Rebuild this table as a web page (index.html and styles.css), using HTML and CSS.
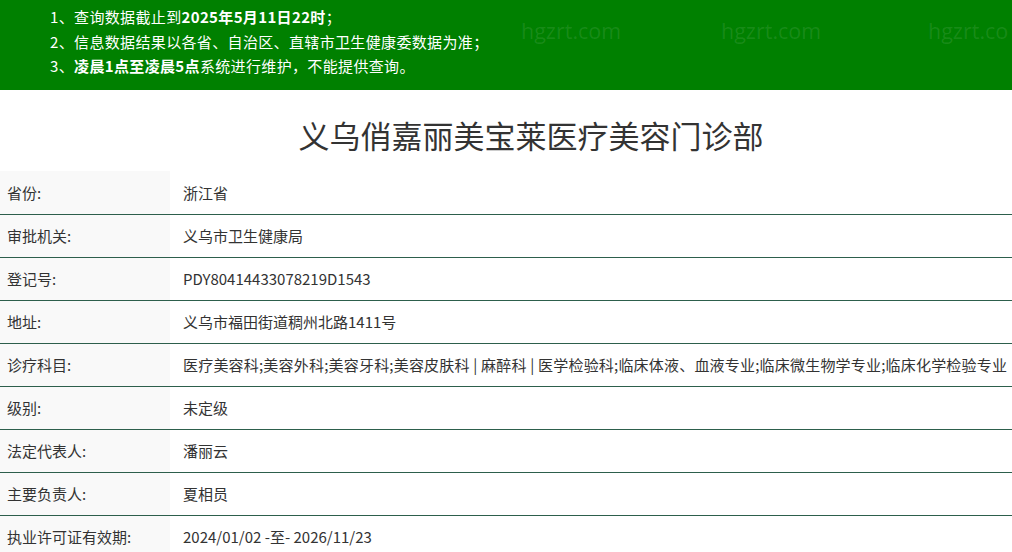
FILE: index.html
```html
<!DOCTYPE html>
<html lang="zh-CN">
  <head>
    <meta charset="UTF-8" />
    <meta name="viewport" content="width=device-width, initial-scale=1.0" />
    <title>义乌俏嘉丽美宝莱医疗美容门诊部</title>
    <link rel="stylesheet" href="styles.css">
  </head>
  <body>
    <div class="notice">
      <p>1、查询数据截止到<b>2025年5月11日22时</b>；</p>
      <p>2、信息数据结果以各省、自治区、直辖市卫生健康委数据为准；</p>
      <p>3、<b>凌晨1点至凌晨5点</b>系统进行维护，不能提供查询。</p>
      <span class="mark mark-1">hgzrt.com</span>
      <span class="mark mark-2">hgzrt.com</span>
      <span class="mark mark-3">hgzrt.co</span>
    </div>
    <div class="container">
      <h1>义乌俏嘉丽美宝莱医疗美容门诊部</h1>
      <table class="info">
        <tr><th>省份:</th><td>浙江省</td></tr>
        <tr><th>审批机关:</th><td>义乌市卫生健康局</td></tr>
        <tr><th>登记号:</th><td>PDY80414433078219D1543</td></tr>
        <tr><th>地址:</th><td>义乌市福田街道稠州北路1411号</td></tr>
        <tr><th>诊疗科目:</th><td class="long">医疗美容科;美容外科;美容牙科;美容皮肤科 | 麻醉科 | 医学检验科;临床体液、血液专业;临床微生物学专业;临床化学检验专业</td></tr>
        <tr><th>级别:</th><td>未定级</td></tr>
        <tr><th>法定代表人:</th><td>潘丽云</td></tr>
        <tr><th>主要负责人:</th><td>夏相员</td></tr>
        <tr><th>执业许可证有效期:</th><td>2024/01/02 -至- 2026/11/23</td></tr>
      </table>
    </div>
  </body>
</html>
```

FILE: styles.css
```css
* {
  margin: 0;
  padding: 0;
  box-sizing: border-box;
}
body {
  font-family: "Noto Sans CJK SC", "Open Sans", sans-serif;
  color: #333;
  background: #fff;
  overflow: hidden;
}
.notice {
  position: relative;
  height: 90px;
  background: #008000;
  color: #fff;
  padding: 5px 0 0 50px;
  font-size: 15px;
  letter-spacing: 0.35px;
}
.notice p {
  line-height: 24.5px;
  white-space: nowrap;
}
.notice b {
  font-weight: bold;
}
.mark {
  position: absolute;
  top: 16px;
  font-family: "Open Sans", sans-serif;
  font-size: 21.5px;
  letter-spacing: 0;
  color: rgba(255, 255, 255, 0.1);
}
.mark-1 { left: 521px; }
.mark-2 { left: 721px; }
.mark-3 { left: 928px; }
.container {
  width: 1012px;
}
h1 {
  font-size: 31px;
  font-weight: normal;
  text-align: center;
  color: #333;
  padding: 23px 0 0 50px;
  height: 81px;
  line-height: 44px;
}
.info {
  width: 100%;
  border-collapse: collapse;
  font-size: 15px;
  table-layout: fixed;
}
.info th {
  width: 170px;
  background: #f9f9f9;
  font-weight: normal;
  text-align: left;
  padding: 0 7px;
  color: #333;
}
.info th,
.info td {
  height: 43px;
  border-bottom: 1px solid #2d5f4c;
  white-space: nowrap;
}
.info td {
  padding-left: 13px;
  overflow: hidden;
}
.info .long {
  letter-spacing: 0.2px;
}
.info tr:last-child th,
.info tr:last-child td {
  border-bottom: none;
}
```
